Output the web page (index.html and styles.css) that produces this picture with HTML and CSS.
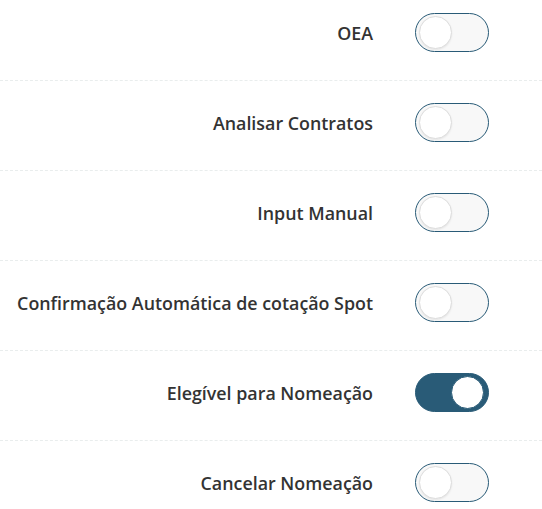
FILE: index.html
```html
<!DOCTYPE html>
<html lang="pt">
<head>
<meta charset="UTF-8" />
<meta name="viewport" content="width=device-width, initial-scale=1" />
<title>Definições</title>
<link rel="stylesheet" href="styles.css">
</head>
<body>
  <div class="settings">
    <div class="row">
      <label class="row-label" for="oea">OEA</label>
      <label class="switch"><input type="checkbox" id="oea"><span class="slider"></span></label>
    </div>
    <div class="row">
      <label class="row-label" for="contratos">Analisar Contratos</label>
      <label class="switch"><input type="checkbox" id="contratos"><span class="slider"></span></label>
    </div>
    <div class="row">
      <label class="row-label" for="manual">Input Manual</label>
      <label class="switch"><input type="checkbox" id="manual"><span class="slider"></span></label>
    </div>
    <div class="row">
      <label class="row-label" for="spot">Confirmação Automática de cotação Spot</label>
      <label class="switch"><input type="checkbox" id="spot"><span class="slider"></span></label>
    </div>
    <div class="row">
      <label class="row-label" for="elegivel">Elegível para Nomeação</label>
      <label class="switch"><input type="checkbox" id="elegivel" checked><span class="slider"></span></label>
    </div>
    <div class="row">
      <label class="row-label" for="cancelar">Cancelar Nomeação</label>
      <label class="switch"><input type="checkbox" id="cancelar"><span class="slider"></span></label>
    </div>
  </div>
</body>
</html>
```

FILE: styles.css
```css
:root {
  --accent: #295b77;
  --text: #333;
  --line: #e9eded;
}

body {
  margin: 0;
  background: #fff;
  color: var(--text);
  font-family: 'Open Sans', 'Noto Sans', sans-serif;
}

.row {
  display: flex;
  align-items: center;
  padding: 22px 0 28px;
  border-bottom: 1px dashed var(--line);
}
.row:first-child {
  padding-top: 13px;
}

.row-label {
  flex: 0 0 415px;
  text-align: right;
  padding-right: 42px;
  box-sizing: border-box;
  font-size: 17.85px;
  font-weight: 600;
}

.switch {
  position: relative;
  display: inline-block;
  width: 74px;
  height: 39px;
}
.switch input {
  opacity: 0;
  width: 0;
  height: 0;
  margin: 0;
}

.slider {
  position: absolute;
  inset: 0;
  background: #f8f8f8;
  border: 1px solid var(--accent);
  border-radius: 20px;
  cursor: pointer;
  transition: background-color 0.2s;
}
.slider::before {
  content: "";
  position: absolute;
  top: 2px;
  left: 3px;
  width: 31px;
  height: 31px;
  border-radius: 50%;
  background: #fff;
  border: 1px solid #ddd;
  box-shadow: 0 1px 2px rgba(0, 0, 0, 0.08);
  transition: transform 0.2s;
}

.switch input:checked + .slider {
  background: var(--accent);
}
.switch input:checked + .slider::before {
  border-color: var(--accent);
  box-shadow: none;
  transform: translateX(32px);
}
```
